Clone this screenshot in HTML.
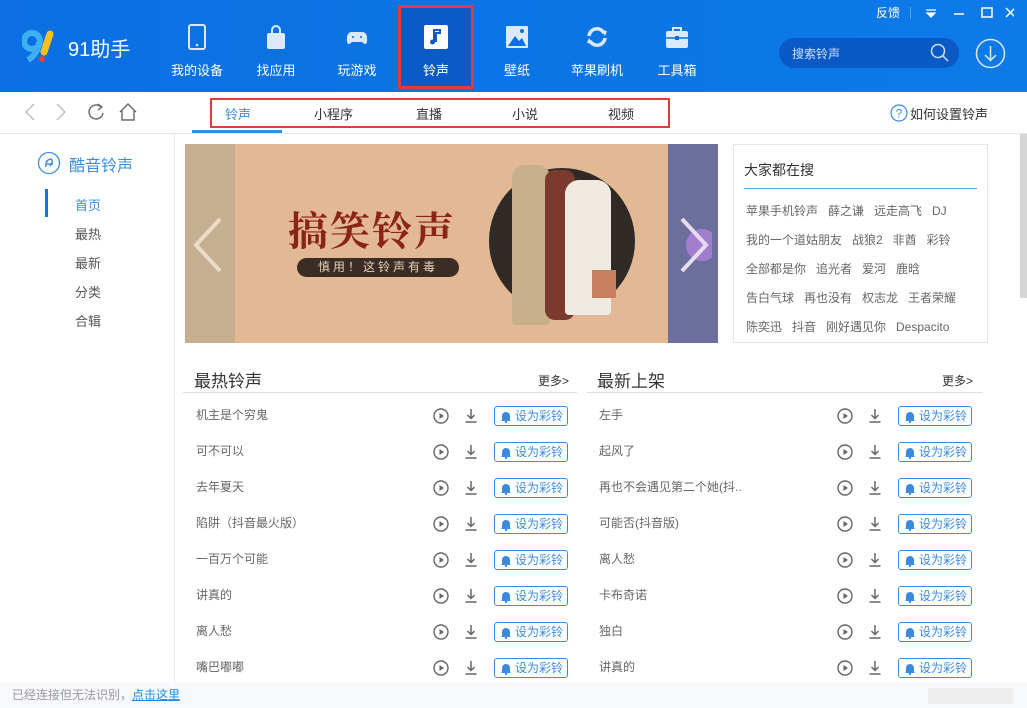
<!DOCTYPE html>
<html><head><meta charset="utf-8"><style>
*{margin:0;padding:0;box-sizing:border-box}
body{width:1027px;height:708px;overflow:hidden;font-family:"Liberation Sans","Noto Sans CJK SC",sans-serif;background:#fff;position:relative;color:#333}
.a{position:absolute}
.hdr{left:0;top:0;width:1027px;height:92px;background:linear-gradient(90deg,#0b6fe3,#0d7ae8)}
.nav{top:0;width:80px;height:92px;text-align:center;color:#fff;font-size:13px}
.nav .ic{position:absolute;left:28px;top:24px;width:24px;height:26px}
.nav span{position:absolute;left:0;width:80px;top:60px}
.sel{background:#0a5bc6;outline:3px solid #e03c3c;outline-offset:-3px}
.tab{top:104px;font-size:13px;color:#333}
.side{font-size:13px;color:#555}
.hot{font-size:12px;color:#666}
.row{font-size:12px;color:#666}
.btn{width:74px;height:20px;border:1px solid #3d8be0;border-radius:3px;color:#3d8be0;font-size:12px;line-height:18px;padding-left:20px;background:#fff}
.btn svg{position:absolute;left:5px;top:3px}
</style></head><body>
<div class="a hdr"></div>
<svg class="a" style="left:22px;top:30px" width="40" height="34" viewBox="0 0 40 34"><circle cx="10" cy="11" r="8" fill="none" stroke="#3cb0f0" stroke-width="6"/><path d="M17 12 Q16 24 6 30" stroke="#3cb0f0" stroke-width="6" fill="none"/><path d="M28 4 L22 22" stroke="#f6c21b" stroke-width="7" stroke-linecap="round"/><circle cx="20" cy="29" r="3" fill="#e8413c"/></svg>
<div class="a" style="left:68px;top:33px;color:#fff;font-size:20px">91助手</div>
<div class="a nav" style="left:157px"><svg class="ic" viewBox="0 0 24 26"><rect x="4" y="1" width="16" height="24" rx="2" fill="none" stroke="#dbe9fb" stroke-width="2"/><circle cx="12" cy="21" r="1.3" fill="#dbe9fb"/></svg><span>我的设备</span></div>
<div class="a nav" style="left:236px"><svg class="ic" viewBox="0 0 24 26"><path d="M8 9V6a4 4 0 0 1 8 0v3" fill="none" stroke="#dbe9fb" stroke-width="2"/><rect x="3" y="9" width="18" height="16" rx="2" fill="#dbe9fb"/></svg><span>找应用</span></div>
<div class="a nav" style="left:317px"><svg class="ic" viewBox="0 0 24 26"><path d="M2 18 Q1 8 7 8 H17 Q23 8 22 18 Q21 22 17 18 H7 Q3 22 2 18Z" fill="#dbe9fb"/><circle cx="8" cy="13" r="1" fill="#0b6fe3"/><circle cx="16" cy="13" r="1" fill="#0b6fe3"/></svg><span>玩游戏</span></div>
<div class="a nav sel" style="left:398px;width:76px;top:5px;height:84px"><svg class="ic" style="left:26px;top:19px" viewBox="0 0 24 26"><rect x="0" y="1" width="24" height="24" rx="2" fill="#fff"/><path d="M10 18V6h6v3h-4v9" fill="none" stroke="#0a5bc6" stroke-width="2"/><circle cx="8.5" cy="18" r="2.5" fill="#0a5bc6"/></svg><span style="width:76px;top:55px">铃声</span></div>
<div class="a nav" style="left:477px"><svg class="ic" viewBox="0 0 24 26"><rect x="1" y="2" width="22" height="22" rx="1" fill="#dbe9fb"/><path d="M3 22 L10 12 L14 17 L17 14 L21 22Z" fill="#0b6fe3"/><circle cx="17" cy="7" r="2" fill="#0b6fe3"/></svg><span>壁纸</span></div>
<div class="a nav" style="left:557px"><svg class="ic" viewBox="0 0 24 26"><path d="M4 12 A8 8 0 0 1 19 9 M20 14 A8 8 0 0 1 5 17" fill="none" stroke="#dbe9fb" stroke-width="3.5"/><path d="M16 6 L22 7 L20 12Z M8 20 L2 19 L4 14Z" fill="#dbe9fb"/></svg><span>苹果刷机</span></div>
<div class="a nav" style="left:637px"><svg class="ic" viewBox="0 0 24 26"><path d="M8 7V4h8v3" fill="none" stroke="#dbe9fb" stroke-width="2"/><rect x="1" y="7" width="22" height="17" rx="2" fill="#dbe9fb"/><path d="M1 14H23" stroke="#0b6fe3" stroke-width="1.5"/><rect x="10" y="12" width="4" height="4" fill="#0b6fe3"/></svg><span>工具箱</span></div>
<div class="a" style="left:876px;top:4px;color:#fff;font-size:12px">反馈</div>
<div class="a" style="left:910px;top:7px;width:1px;height:12px;background:#5e9fee"></div>
<svg class="a" style="left:924px;top:7px" width="90" height="12" viewBox="0 0 90 12"><path d="M2 3h10M3 6h8l-4 4z" stroke="#fff" fill="#fff" stroke-width="1.2"/><path d="M30 7h10" stroke="#fff" stroke-width="1.5"/><rect x="58" y="1" width="10" height="9" fill="none" stroke="#fff" stroke-width="1.5"/><path d="M82 1l9 9M91 1l-9 9" stroke="#fff" stroke-width="1.5"/></svg>
<div class="a" style="left:779px;top:38px;width:180px;height:30px;border-radius:15px;background:#0a5ac5"></div>
<div class="a" style="left:792px;top:45px;color:#cfe0f7;font-size:12px">搜索铃声</div>
<svg class="a" style="left:930px;top:43px" width="20" height="20" viewBox="0 0 20 20"><circle cx="8" cy="8" r="6.5" fill="none" stroke="#cfe0f7" stroke-width="1.5"/><path d="M13 13l5 5" stroke="#cfe0f7" stroke-width="1.5"/></svg>
<svg class="a" style="left:975px;top:38px" width="31" height="31" viewBox="0 0 31 31"><circle cx="15.5" cy="15.5" r="14" fill="none" stroke="#dbe9fb" stroke-width="1.5"/><path d="M15.5 8v14M10 17l5.5 5.5 5.5-5.5" fill="none" stroke="#dbe9fb" stroke-width="1.5"/></svg>
<div class="a" style="left:0;top:133px;width:1027px;height:1px;background:#e6e6e6"></div>
<svg class="a" style="left:20px;top:101px" width="125" height="22" viewBox="0 0 125 22"><path d="M14 3l-8 8 8 8" fill="none" stroke="#bbb" stroke-width="1.3"/><path d="M37 3l8 8-8 8" fill="none" stroke="#bbb" stroke-width="1.3"/><path d="M81 6a7 7 0 1 0 2 6" fill="none" stroke="#666" stroke-width="1.4"/><path d="M78 3l4 3-4 3" fill="none" stroke="#666" stroke-width="1.4"/><path d="M100 11l8-8 8 8M102 10v9h12v-9" fill="none" stroke="#666" stroke-width="1.4"/></svg>
<div class="a" style="left:210px;top:98px;width:460px;height:30px;border:2px solid #e03c3c"></div>
<div class="a" style="left:192px;top:130px;width:90px;height:3px;background:#3b8de0"></div>
<div class="a tab" style="left:225px;color:#3b8de0">铃声</div>
<div class="a tab" style="left:314px">小程序</div>
<div class="a tab" style="left:416px">直播</div>
<div class="a tab" style="left:512px">小说</div>
<div class="a tab" style="left:608px">视频</div>
<svg class="a" style="left:890px;top:104px" width="18" height="18" viewBox="0 0 18 18"><circle cx="9" cy="9" r="8" fill="none" stroke="#3b8de0" stroke-width="1.2"/><text x="9" y="13.5" font-size="12" text-anchor="middle" fill="#3b8de0" font-family="Liberation Sans">?</text></svg>
<div class="a" style="left:910px;top:104px;font-size:13px;color:#333">如何设置铃声</div>
<div class="a" style="left:174px;top:134px;width:1px;height:550px;background:#e8e8e8"></div>
<svg class="a" style="left:37px;top:151px" width="24" height="24" viewBox="0 0 24 24"><circle cx="12" cy="12" r="10.5" fill="none" stroke="#3b8de0" stroke-width="1.3"/><path d="M9 16 Q8 9 14 8 Q17 10 13 15 M10 13h6" fill="none" stroke="#3b8de0" stroke-width="1.5"/></svg>
<div class="a" style="left:69px;top:152px;font-size:16px;color:#3b8de0">酷音铃声</div>
<div class="a" style="left:45px;top:189px;width:3px;height:28px;background:#1f73c8"></div>
<div class="a side" style="left:75px;top:195px;color:#3b8de0">首页</div>
<div class="a side" style="left:75px;top:224px">最热</div>
<div class="a side" style="left:75px;top:253px">最新</div>
<div class="a side" style="left:75px;top:282px">分类</div>
<div class="a side" style="left:75px;top:311px">合辑</div>
<div class="a" style="left:185px;top:144px;width:533px;height:199px;background:#e3b995"></div>
<div class="a" style="left:185px;top:144px;width:50px;height:199px;background:#c6ae91"></div>
<div class="a" style="left:668px;top:144px;width:50px;height:199px;background:#6c6f9b"></div>
<svg class="a" style="left:190px;top:215px" width="36" height="60" viewBox="0 0 36 60"><path d="M30 4L6 30l24 26" fill="none" stroke="#eadcc8" stroke-width="4"/></svg>
<svg class="a" style="left:676px;top:215px" width="36" height="60" viewBox="0 0 36 60"><circle cx="26" cy="30" r="16" fill="#a27dcd"/><path d="M6 4l24 26L6 56" fill="none" stroke="#e6dcef" stroke-width="4"/></svg>
<div class="a" style="left:288px;top:200px;font-size:40px;font-weight:bold;color:#8a2418;letter-spacing:2px;font-family:'Noto Serif CJK SC',serif">搞笑铃声</div>
<div class="a" style="left:297px;top:258px;width:162px;height:19px;border-radius:10px;background:#3b2d25;color:#e8cfb6;font-size:12px;text-align:center;line-height:19px;letter-spacing:3px">慎用！这铃声有毒</div>
<div class="a" style="left:489px;top:168px;width:146px;height:146px;border-radius:50%;background:#2f2a26"></div>
<div class="a" style="left:512px;top:165px;width:38px;height:160px;background:#c8b08a;border-radius:12px 12px 4px 4px"></div>
<div class="a" style="left:545px;top:170px;width:30px;height:150px;background:#7a3b2e;border-radius:10px"></div>
<div class="a" style="left:565px;top:180px;width:46px;height:135px;background:#f0ebe2;border-radius:14px 14px 4px 4px"></div>
<div class="a" style="left:592px;top:270px;width:24px;height:28px;background:#c77f5f"></div>
<div class="a" style="left:733px;top:144px;width:255px;height:199px;border:1px solid #e6e6e6"></div>
<div class="a" style="left:744px;top:160px;font-size:14px;color:#333">大家都在搜</div>
<div class="a" style="left:744px;top:188px;width:233px;height:1px;background:#4aa8dd"></div>
<div class="a hot" style="left:746px;top:202px">苹果手机铃声&nbsp;&nbsp; 薛之谦&nbsp;&nbsp; 远走高飞&nbsp;&nbsp; DJ</div>
<div class="a hot" style="left:746px;top:231px">我的一个道姑朋友&nbsp;&nbsp; 战狼2&nbsp;&nbsp; 非酋&nbsp;&nbsp; 彩铃</div>
<div class="a hot" style="left:746px;top:260px">全部都是你&nbsp;&nbsp; 追光者&nbsp;&nbsp; 爱河&nbsp;&nbsp; 鹿晗</div>
<div class="a hot" style="left:746px;top:289px">告白气球&nbsp;&nbsp; 再也没有&nbsp;&nbsp; 权志龙&nbsp;&nbsp; 王者荣耀</div>
<div class="a hot" style="left:746px;top:318px">陈奕迅&nbsp;&nbsp; 抖音&nbsp;&nbsp; 刚好遇见你&nbsp;&nbsp; Despacito</div>
<div class="a" style="left:1020px;top:134px;width:7px;height:164px;background:#d6d6d6"></div>
<div class="a" style="left:194px;top:367px;font-size:17px;color:#333">最热铃声</div>
<div class="a" style="left:538px;top:372px;font-size:12px;color:#333">更多&gt;</div>
<div class="a" style="left:183px;top:392px;width:394px;height:1px;background:#ddd"></div>
<div class="a" style="left:597px;top:367px;font-size:17px;color:#333">最新上架</div>
<div class="a" style="left:942px;top:372px;font-size:12px;color:#333">更多&gt;</div>
<div class="a" style="left:587px;top:392px;width:396px;height:1px;background:#ddd"></div>
<div id="rows"></div>
<script>
var L=["机主是个穷鬼","可不可以","去年夏天","陷阱（抖音最火版）","一百万个可能","讲真的","离人愁","嘴巴嘟嘟"];
var R=["左手","起风了","再也不会遇见第二个她(抖..","可能否(抖音版)","离人愁","卡布奇诺","独白","讲真的"];
var h="";
function row(x,t,y,bx){
 h+='<div class="a row" style="left:'+x+'px;top:'+(y-9)+'px">'+t+'</div>';
 h+='<svg class="a" style="left:'+(bx-61)+'px;top:'+(y-8)+'px" width="46" height="18" viewBox="0 0 46 18"><circle cx="8" cy="9" r="7" fill="none" stroke="#666" stroke-width="1.4"/><path d="M6.5 6v6l4.5-3z" fill="#666"/><path d="M38 2v9M34.5 8l3.5 3.5 3.5-3.5M32.5 15h11" fill="none" stroke="#666" stroke-width="1.5"/></svg>';
 h+='<div class="a btn" style="left:'+bx+'px;top:'+(y-9)+'px"><svg width="12" height="13" viewBox="0 0 12 13"><path d="M2 10V6a4 4 0 0 1 8 0v4l1 1H1z" fill="#3d8be0"/><circle cx="6" cy="12" r="1.2" fill="#3d8be0"/></svg>设为彩铃</div>';
}
for(var i=0;i<8;i++){var y=415+i*36;row(196,L[i],y,494);row(599,R[i],y,898);}
document.getElementById("rows").outerHTML=h;
</script>
<div class="a" style="left:0;top:683px;width:1027px;height:25px;background:#f6f8fb"></div>
<div class="a" style="left:12px;top:686px;font-size:12px;color:#999">已经连接但无法识别，<span style="color:#1a8ce0;text-decoration:underline">点击这里</span></div>
<div class="a" style="left:928px;top:688px;width:85px;height:16px;background:#eeeeee"></div>
</body></html>
